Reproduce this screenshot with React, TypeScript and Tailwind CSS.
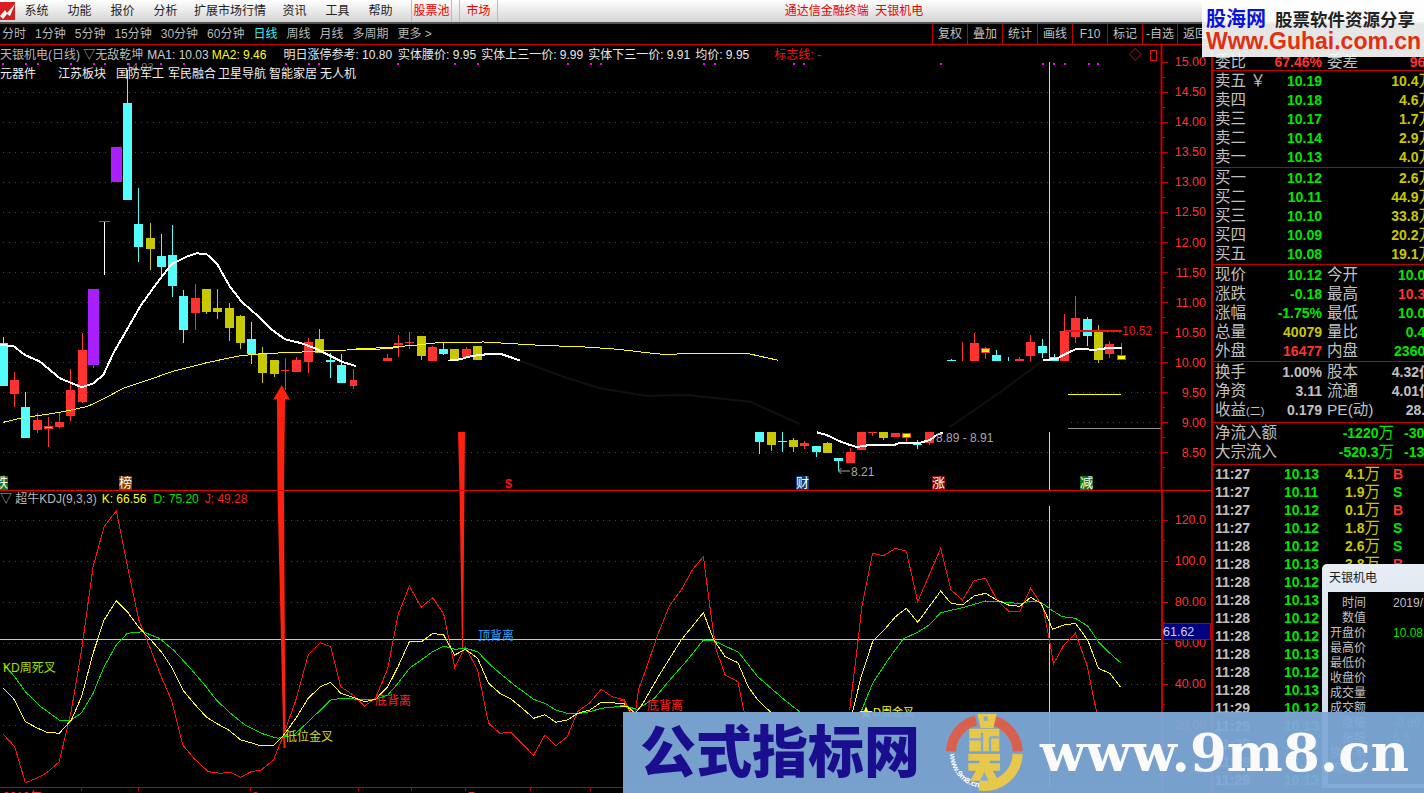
import React from "react";

type P = [number, number];
const RED = "#ff3232", CY = "#54fcfc", OL = "#c8c800", PU = "#aa1fff", YE = "#ffff00";
const z = (ox: number, oy: number, sx = 3) => (p: P): P => [p[0] / sx + ox, p[1] / 3 + oy];
const z7 = z(0, 60), z8 = z(350, 310), z9 = z(750, 290);
const z10 = z(0, 490, 2.45), z11 = z(620, 490, 2.613);
const line = (a: P[], f: (p: P) => P) => a.map(f).map((p) => `${p[0].toFixed(1)},${p[1].toFixed(1)}`).join(" ");

// X, wickTop, wickBottom, bodyTop, bodyBottom, colour, bodyWidth, wickColour
type C = [number, number, number, number, number, string, number?, string?];
const c7: C[] = [
  [10, 830, 978, 850, 978, CY, 9], [43, 936, 1040, 960, 1002, RED], [76, 995, 1135, 1041, 1133, CY], [112, 1060, 1118, 1080, 1110, RED],
  [145, 1072, 1160, 1098, 1106, YE, 8, RED], [178, 1060, 1105, 1086, 1100, RED], [211, 927, 1082, 990, 1068, RED], [247, 820, 1030, 870, 1025, RED],
  [280, 900, 923, 687, 915, PU, 11], [313, 484, 645, 484, 486, PU, 11, "#ffffff"], [349, 261, 366, 261, 366, PU, 11], [382, 30, 420, 129, 420, CY],
  [415, 385, 605, 492, 561, CY], [451, 489, 630, 534, 567, OL], [484, 522, 650, 588, 621, CY], [517, 495, 711, 585, 678, CY], [550, 690, 849, 708, 810, CY],
  [586, 672, 810, 714, 759, RED], [619, 687, 762, 687, 756, OL], [652, 687, 777, 744, 756, OL], [688, 729, 843, 744, 804, OL], [721, 765, 867, 768, 849, OL],
  [754, 786, 912, 837, 882, CY], [787, 861, 969, 879, 939, OL], [823, 900, 951, 900, 942, OL], [856, 894, 990, 930, 933, RED, 8], [889, 891, 936, 900, 936, RED],
  [925, 834, 939, 846, 906, RED], [958, 807, 879, 837, 879, OL], [991, 879, 954, 900, 906, CY], [1024, 882, 969, 915, 969, CY], [1060, 927, 987, 960, 978, RED, 7],
];
const c8: C[] = [
  [10, 177, 237, 210, 228, RED, 6], [112, 132, 153, 144, 153, RED], [145, 75, 141, 99, 105, RED], [178, 67, 117, 96, 99, RED], [214, 78, 150, 78, 138, OL],
  [247, 108, 153, 111, 153, RED], [280, 99, 135, 117, 132, CY], [313, 117, 153, 117, 153, OL], [349, 111, 141, 117, 141, RED], [382, 108, 150, 108, 150, OL],
];
const c9: C[] = [
  [28, 426, 492, 426, 456, CY], [64, 426, 483, 426, 465, OL], [97, 426, 486, 453, 456, CY], [130, 444, 486, 450, 471, OL], [163, 453, 477, 459, 468, RED],
  [199, 468, 501, 468, 486, CY], [232, 456, 489, 459, 489, OL], [265, 504, 543, 504, 513, CY], [301, 474, 519, 486, 519, RED], [334, 426, 480, 426, 480, RED],
  [367, 426, 438, 426, 429, RED], [400, 426, 450, 426, 444, OL], [436, 429, 441, 429, 441, RED], [469, 429, 456, 429, 441, YE, 8, RED], [501, 450, 477, 462, 465, CY],
  [538, 426, 465, 426, 459, RED], [603, 208, 212, 210, 212, CY], [636, 156, 212, 156, 158, RED, 1], [673, 129, 212, 159, 212, RED], [706, 170, 207, 174, 186, YE, 8, RED],
  [739, 180, 212, 195, 212, CY], [775, 200, 212, 200, 212, CY, 1], [808, 200, 212, 207, 212, PU, 8, RED], [841, 135, 212, 156, 198, RED], [877, 147, 204, 168, 189, CY],
  [913, 192, 212, 201, 212, CY], [943, 72, 243, 123, 212, RED], [976, 18, 159, 84, 141, RED], [1012, 81, 168, 87, 138, CY], [1045, 105, 219, 126, 210, OL],
  [1078, 153, 204, 162, 192, RED], [1114, 159, 207, 195, 207, YE, 8, RED],
];

const ma1a: P[] = [[0, 855], [40, 858], [75, 885], [120, 905], [180, 955], [245, 982], [280, 970], [310, 945], [340, 880], [380, 810], [420, 740], [470, 670], [515, 612], [560, 590], [590, 580], [620, 583], [650, 610], [690, 680], [725, 725], [770, 765], [810, 805], [855, 838], [905, 850], [945, 865], [985, 885], [1025, 905], [1067, 918]];
const ma1b: P[] = [[295, 152], [330, 148], [365, 138], [400, 134], [420, 131], [450, 131], [480, 141], [510, 152]];
const ma1c: P[] = [[200, 427], [230, 435], [265, 452], [300, 465], [320, 471], [365, 464], [435, 464], [450, 458], [510, 458], [540, 450], [560, 435], [580, 427]];
const ma1d: P[] = [[878, 211], [920, 206], [950, 190], [980, 176], [1010, 178], [1030, 180], [1075, 174], [1115, 173]];
const ma2a: P[] = [[10, 1087], [60, 1075], [180, 1057], [260, 1040], [300, 1022], [370, 985], [430, 965], [515, 935], [620, 908], [720, 887], [800, 880], [870, 878], [975, 872], [1040, 870], [1110, 868], [1170, 866], [1200, 860]];
const ma2b: P[] = [[0, 118], [60, 115], [120, 112], [200, 105], [265, 98], [400, 96], [470, 100], [570, 106], [705, 111], [805, 118], [880, 127], [940, 133], [1075, 130], [1200, 132], [1285, 151]];

const j1: P[] = [[8, 733], [36, 770], [62, 878], [90, 865], [115, 848], [145, 815], [175, 660], [200, 480], [228, 230], [255, 110], [285, 62], [310, 215], [340, 390], [370, 480], [395, 560], [420, 630], [448, 765], [475, 805], [510, 845], [540, 850], [565, 847], [590, 862], [615, 845], [640, 840], [670, 810], [690, 750], [725, 630], [755, 495], [785, 458], [810, 470], [835, 590], [865, 615], [893, 648], [920, 625], [950, 535], [975, 375], [1003, 288], [1032, 352], [1060, 323], [1087, 372], [1114, 532], [1140, 470], [1170, 540], [1197, 700], [1225, 730], [1252, 727], [1280, 762], [1307, 796], [1335, 735], [1362, 767], [1390, 740], [1415, 665], [1445, 638], [1473, 598], [1500, 620], [1530, 630], [1545, 665]];
const k1: P[] = [[8, 595], [36, 630], [62, 695], [90, 713], [115, 727], [145, 730], [175, 690], [200, 620], [228, 490], [255, 390], [285, 332], [312, 365], [340, 412], [370, 450], [395, 485], [420, 530], [448, 600], [475, 640], [505, 680], [530, 700], [560, 720], [590, 750], [615, 758], [640, 768], [670, 767], [695, 735], [725, 685], [755, 625], [785, 590], [810, 577], [835, 610], [865, 622], [893, 635], [920, 628], [950, 590], [975, 530], [1003, 455], [1032, 456], [1060, 430], [1087, 435], [1114, 495], [1140, 478], [1170, 505], [1197, 580], [1225, 610], [1252, 627], [1280, 655], [1307, 685], [1335, 674], [1362, 697], [1390, 690], [1415, 670], [1445, 660], [1473, 637], [1500, 638], [1530, 642], [1545, 665]];
const d1: P[] = [[8, 520], [36, 560], [62, 605], [100, 650], [145, 690], [175, 690], [200, 668], [228, 610], [255, 530], [285, 465], [312, 430], [350, 425], [390, 445], [425, 480], [470, 540], [505, 590], [530, 630], [565, 670], [600, 705], [640, 730], [680, 745], [720, 735], [760, 690], [810, 630], [835, 625], [880, 628], [920, 628], [950, 615], [975, 580], [1003, 535], [1032, 510], [1060, 485], [1087, 468], [1114, 478], [1140, 475], [1170, 485], [1197, 520], [1225, 550], [1260, 585], [1307, 628], [1335, 640], [1362, 660], [1390, 670], [1420, 670], [1445, 665], [1473, 655], [1530, 648], [1545, 657]];
const j2: P[] = [[0, 630], [10, 630], [15, 645], [25, 665], [40, 670], [48, 600], [70, 530], [100, 430], [130, 345], [160, 300], [190, 238], [218, 200], [235, 350], [250, 475], [275, 555], [308, 575], [325, 670]];
const k2: P[] = [[0, 648], [20, 650], [40, 670], [60, 640], [100, 560], [160, 450], [218, 368], [245, 450], [275, 500], [308, 518], [335, 590], [360, 630], [395, 668]];
const d2: P[] = [[0, 645], [20, 650], [45, 658], [90, 625], [130, 570], [180, 505], [218, 450], [245, 452], [310, 487], [360, 560], [430, 630], [470, 666]];
const j3: P[] = [[600, 660], [615, 520], [632, 350], [660, 190], [688, 197], [720, 175], [748, 183], [778, 335], [808, 255], [838, 175], [865, 300], [895, 330], [925, 272], [955, 265], [985, 330], [1015, 363], [1045, 363], [1073, 295], [1105, 350], [1122, 450], [1133, 522], [1160, 465], [1190, 430], [1220, 525], [1245, 665]];
const k3: P[] = [[608, 665], [630, 560], [660, 455], [690, 420], [720, 380], [748, 355], [778, 397], [808, 350], [838, 303], [865, 340], [895, 345], [925, 318], [955, 310], [985, 330], [1015, 345], [1045, 349], [1073, 322], [1100, 340], [1122, 395], [1130, 418], [1160, 405], [1190, 400], [1222, 450], [1250, 535], [1280, 550], [1308, 592]];
const d3: P[] = [[630, 665], [660, 580], [700, 510], [740, 447], [780, 425], [808, 405], [838, 368], [895, 353], [955, 333], [1015, 337], [1045, 341], [1073, 333], [1100, 337], [1125, 358], [1155, 380], [1190, 385], [1222, 408], [1250, 455], [1280, 490], [1308, 518]];

const Candles = ({ data, f }: { data: C[]; f: (p: P) => P }) => (
  <g shapeRendering="crispEdges">
    {data.map((d, i) => {
      const [x, wt] = f([d[0], d[1]]);
      const wb = f([d[0], d[2]])[1], bt = f([d[0], d[3]])[1], bb = f([d[0], d[4]])[1];
      const w = d[6] ?? 9;
      const cx = Math.round(x);
      return (
        <g key={i}>
          <line x1={cx + 0.5} x2={cx + 0.5} y1={wt} y2={Math.max(wb, wt + 1)} stroke={d[7] ?? d[5]} />
          <rect x={cx - Math.floor(w / 2)} y={bt} width={w} height={Math.max(bb - bt, 1)} fill={d[5]} stroke={d[7] && w === 8 ? d[7] : "none"} strokeWidth={d[7] && w === 8 ? 1 : 0} />
        </g>
      );
    })}
  </g>
);

const priceTicks = ["15.00", "14.50", "14.00", "13.50", "13.00", "12.50", "12.00", "11.50", "11.00", "10.50", "10.00", "9.50", "9.00", "8.50"];
const priceY = (i: number) => 61.7 + i * 30.05;
const magenta = [2, 25, 37, 70, 93, 104, 127, 160, 183, 285, 308, 318, 397, 454, 477, 567, 590, 600, 703, 714, 793, 803, 940, 1042, 1053, 1064, 1088, 1097];

const tags: [number, string, string][] = [[-5, "跌", "#0a7a14"], [119, "榜", "#7f3d0a"], [796, "财", "#0a3c70"], [932, "涨", "#7d0a0a"], [1080, "减", "#0a7a14"]];

const PriceChart = () => (
  <svg width={1211} height={445} viewBox="0 45 1211 445" className="block" fontSize={12}>
    {priceTicks.slice(1).map((_, i) => {
      const y = Math.round(priceY(i + 1)) + 0.5;
      return <line key={i} x1={3} x2={1162} y1={y} y2={y} stroke="#b81818" strokeDasharray="1 5" shapeRendering="crispEdges" />;
    })}
    {magenta.map((x) => <rect key={x} x={x} y={63} width={2} height={2} fill="#ff00ff" />)}
    <line x1={1049.5} x2={1049.5} y1={62} y2={490} stroke="#d0d0d0" shapeRendering="crispEdges" />
    <text x={126} y={71} fill="#777" fontSize={11}>14.93</text>
    <Candles data={c7} f={z7} />
    <Candles data={c8} f={z8} />
    <Candles data={c9} f={z9} />
    <polyline points={line(ma2a, z7)} fill="none" stroke={YE} strokeWidth={1} shapeRendering="crispEdges" />
    <polyline points={line(ma2b, z8)} fill="none" stroke={YE} strokeWidth={1} shapeRendering="crispEdges" />
    <polyline points={line(ma1a, z7)} fill="none" stroke="#fff" strokeWidth={2} shapeRendering="crispEdges" />
    <polyline points={line(ma1b, z8)} fill="none" stroke="#fff" strokeWidth={2} shapeRendering="crispEdges" />
    <rect x={357} y={361} width={711} height={71} fill="#000" />
    <polyline points={line([[510, 152], [640, 200], [750, 235], [890, 258], [1010, 255], [1200, 275], [1350, 342]], z8)} fill="none" stroke="#101010" strokeWidth={2} />
    <polyline points={line([[600, 410], [760, 300], [880, 211]], z9)} fill="none" stroke="#101010" strokeWidth={2} />
    <polyline points={line(ma1c, z9)} fill="none" stroke="#fff" strokeWidth={2} shapeRendering="crispEdges" />
    <polyline points={line(ma1d, z9)} fill="none" stroke="#fff" strokeWidth={2} shapeRendering="crispEdges" />
    <polygon points="281.7,385 290,400 285,399 284,490 277.5,490 277,399 273,400" fill="#ff2010" />
    <polygon points="458,432 465,432 464.5,490 459.5,490" fill="#ff2010" />
    <rect x={1065} y={330} width={57} height={2} fill="#f01010" />
    <text x={1122} y={335} fill="#e81818" fontSize={12}>10.52</text>
    <rect x={1068} y={394} width={53} height={1} fill={YE} />
    <rect x={1068} y={428} width={94} height={1} fill="#909090" />
    <text x={936} y={442} fill="#a8a8a8" fontSize={12}>8.89 - 8.91</text>
    <path d="M838.5 471H850M838.5 471l3-3M838.5 471l3 3" stroke="#a8a8a8" fill="none" />
    <text x={851} y={476} fill="#a8a8a8" fontSize={12}>8.21</text>
    {tags.map(([x, t, bg]) => (
      <g key={x}>
        <rect x={x} y={476} width={13} height={14} fill={bg} />
        <text x={x} y={487} fill="#fff" fontSize={13}>{t}</text>
      </g>
    ))}
    <text x={505} y={488} fill="#f01010" fontSize={13} fontWeight={700}>$</text>
    <text x={1135} y={59} fill="#e01010" fontSize={13} textAnchor="middle">◇</text>
    <rect x={1150.5} y={50.5} width={6} height={10} fill="none" stroke="#e01010" />
    <line x1={1161.5} x2={1161.5} y1={45} y2={490} stroke="#c00000" strokeWidth={2} />
    {priceTicks.map((t, i) => {
      const y = priceY(i);
      return (
        <g key={t}>
          <line x1={1162} x2={1168} y1={Math.round(y) + 0.5} y2={Math.round(y) + 0.5} stroke="#c00000" shapeRendering="crispEdges" />
          <line x1={1162} x2={1165} y1={Math.round(y + 15) + 0.5} y2={Math.round(y + 15) + 0.5} stroke="#c00000" shapeRendering="crispEdges" />
          <text x={1206} y={y + 4.5} textAnchor="end" fill={RED} fontSize={12.5}>{t}</text>
        </g>
      );
    })}
  </svg>
);

const subTicks: [string, number][] = [["120.0", 519.6], ["100.0", 560.7], ["80.00", 601.7], ["60.00", 642.7], ["40.00", 683.7], ["20.00", 724.7]];

const KdjChart = () => (
  <svg width={1211} height={302} viewBox="0 491 1211 302" className="block" fontSize={12}>
    {subTicks.map(([t, y]) => <line key={t} x1={3} x2={1162} y1={Math.round(y) + 0.5} y2={Math.round(y) + 0.5} stroke="#b81818" strokeDasharray="1 5" shapeRendering="crispEdges" />)}
    <line x1={1049.5} x2={1049.5} y1={506} y2={787} stroke="#d0d0d0" shapeRendering="crispEdges" />
    <rect x={0} y={639} width={1162} height={1} fill="#c8c8c8" />
    <polygon points="277.5,491 284,491 285.5,748 283.5,748" fill="#ff2010" />
    <polygon points="459.5,491 464.5,491 463,648 462,648" fill="#ff2010" />
    {[[j1, z10, "#ff1010"], [d1, z10, "#00e000"], [k1, z10, YE], [j2, z11, "#ff1010"], [d2, z11, "#00e000"], [k2, z11, YE], [j3, z11, "#ff1010"], [d3, z11, "#00e000"], [k3, z11, YE]].map((s, i) => (
      <polyline key={i} points={line(s[0] as P[], s[1] as (p: P) => P)} fill="none" stroke={s[2] as string} strokeWidth={1} shapeRendering="crispEdges" />
    ))}
    <text x={3} y={672} fill="#a8e000" fontSize={12}>KD周死叉</text>
    <text x={285} y={741} fill="#d8d820" fontSize={12}>低位金叉</text>
    <text x={375} y={705} fill="#ff2020" fontSize={12}>底背离</text>
    <text x={478} y={640} fill="#28a0ff" fontSize={12}>顶背离</text>
    <text x={647} y={710} fill="#ff2020" fontSize={12}>底背离</text>
    <polygon points="866,706 868,711 873,711 869,714 870.5,719 866,716 861.5,719 863,714 859,711 864,711" fill={YE} />
    <text x={873} y={716} fill={YE} fontSize={11}>D周金叉</text>
    <rect x={0} y={787} width={1162} height={1} fill="#c00000" />
    {[81, 138, 250, 358, 411, 465, 530, 590].map((x) => <line key={x} x1={x + 0.5} x2={x + 0.5} y1={788} y2={791} stroke="#c00000" shapeRendering="crispEdges" />)}
    <text x={3} y={801} fill={RED} fontSize={12}>2019年</text>
    <text x={252} y={801} fill={RED} fontSize={12}>8</text>
    <text x={468} y={801} fill={RED} fontSize={12}>7</text>
    <line x1={1162} x2={1162} y1={491} y2={793} stroke="#c00000" strokeWidth={2} />
    {subTicks.map(([t, y]) => (
      <g key={t}>
        <line x1={1162} x2={1168} y1={Math.round(y) + 0.5} y2={Math.round(y) + 0.5} stroke="#c00000" shapeRendering="crispEdges" />
        <line x1={1162} x2={1165} y1={Math.round(y + 20.5) + 0.5} y2={Math.round(y + 20.5) + 0.5} stroke="#c00000" shapeRendering="crispEdges" />
        <text x={1206} y={y + 4.5} textAnchor="end" fill={RED} fontSize={12.5}>{t}</text>
      </g>
    ))}
    <rect x={1163.5} y={623.5} width={47} height={16} fill="#000080" stroke="#b00000" />
    <text x={1163} y={636} fill="#d0d0ff" fontSize={12.5}>61.62</text>
  </svg>
);

const L = ({ children, w = "w-[72px]" }: { children: React.ReactNode; w?: string }) => (
  <span className={`${w} shrink-0 text-[15.5px] leading-none text-[#c0c0c0] whitespace-nowrap`}>{children}</span>
);
const Num = ({ children, color, w = "w-[35px]" }: { children: React.ReactNode; color: string; w?: string }) => (
  <span className={`${w} flex shrink-0 justify-end text-[14px] font-bold leading-none whitespace-nowrap`} style={{ color }}>{children}</span>
);
const G = "#00e600", Y2 = "#c8c800", W = "#c0c0c0";

const Book = ({ label, price, vol }: { label: string; price: string; vol: string }) => (
  <div className="flex h-[19px] w-[230px] items-center pl-[2px]">
    <L>{label}</L>
    <Num color={G}>{price}</Num>
    <span className="ml-auto mr-[9px] flex items-center text-[14px] font-bold leading-none whitespace-nowrap text-[#c8c800]">
      {vol}<span className="text-[15.5px] font-normal">万</span>
    </span>
  </div>
);

const Stat = ({ a, av, ac, b, bv, bc }: { a: React.ReactNode; av: string; ac: string; b: string; bv: string; bc: string }) => (
  <div className="flex h-[19px] w-[240px] items-center pl-[2px]">
    <L>{a}</L>
    <Num color={ac}>{av}</Num>
    <span className="ml-[5px] w-[50px] shrink-0 whitespace-nowrap text-[15.5px] leading-none text-[#c0c0c0]">{b}</span>
    <span className="w-[56px] shrink-0 text-right text-[14px] font-bold leading-none whitespace-nowrap" style={{ color: bc }}>{bv}</span>
  </div>
);

const trades: [string, string, string, string][] = [
  ["11:27", "10.13", "4.1", "B"], ["11:27", "10.11", "1.9", "S"], ["11:27", "10.12", "0.1", "B"], ["11:27", "10.12", "1.8", "S"], ["11:28", "10.12", "2.6", "S"], ["11:28", "10.13", "3.8", "B"],
  ["11:28", "10.12", "1.2", "S"], ["11:28", "10.13", "0.6", "B"], ["11:28", "10.12", "2.1", "S"], ["11:28", "10.12", "0.9", "S"], ["11:28", "10.13", "1.4", "B"], ["11:28", "10.12", "0.7", "S"],
  ["11:28", "10.13", "1.1", "B"], ["11:29", "10.12", "2.2", "S"], ["11:29", "10.13", "0.5", "B"], ["11:29", "10.13", "1.6", "B"], ["11:29", "10.12", "0.8", "S"], ["11:29", "10.13", "3.0", "B"],
];

const Panel = () => (
  <div className="flex h-[748px] w-[213px] flex-col overflow-hidden border-l-2 border-[#c00000]">
    <div className="flex h-[26px] w-[240px] shrink-0 items-end border-b border-[#c00000] pb-[1px] pl-[2px]">
      <L>委比</L>
      <Num color={RED}>67.46%</Num>
      <span className="ml-[5px] w-[50px] whitespace-nowrap text-[15.5px] leading-none text-[#c0c0c0]">委差</span>
      <span className="w-[56px] text-right text-[14px] font-bold leading-none" style={{ color: RED }}>961</span>
    </div>
    <div className="shrink-0 border-b border-[#c00000] pb-[1px]">
      <Book label="卖五 ￥" price="10.19" vol="10.4" />
      <Book label="卖四" price="10.18" vol="4.6" />
      <Book label="卖三" price="10.17" vol="1.7" />
      <Book label="卖二" price="10.14" vol="2.9" />
      <Book label="卖一" price="10.13" vol="4.0" />
    </div>
    <div className="shrink-0 border-b border-[#c00000] pb-[1px]">
      <Book label="买一" price="10.12" vol="2.6" />
      <Book label="买二" price="10.11" vol="44.9" />
      <Book label="买三" price="10.10" vol="33.8" />
      <Book label="买四" price="10.09" vol="20.2" />
      <Book label="买五" price="10.08" vol="19.1" />
    </div>
    <div className="shrink-0 border-b border-[#c00000] pb-[1px]">
      <Stat a="现价" av="10.12" ac={G} b="今开" bv="10.05" bc={G} />
      <Stat a="涨跌" av="-0.18" ac={G} b="最高" bv="10.32" bc={RED} />
      <Stat a="涨幅" av="-1.75%" ac={G} b="最低" bv="10.03" bc={G} />
      <Stat a="总量" av="40079" ac={Y2} b="量比" bv="0.45" bc={G} />
      <Stat a="外盘" av="16477" ac={RED} b="内盘" bv="23602" bc={G} />
    </div>
    <div className="shrink-0 border-b border-[#c00000] pb-[3px]">
      <Stat a="换手" av="1.00%" ac={W} b="股本" bv="4.32亿" bc={W} />
      <Stat a="净资" av="3.11" ac={W} b="流通" bv="4.01亿" bc={W} />
      <Stat a={<>收益<span className="text-[11px]">(二)</span></>} av="0.179" ac={W} b="PE(动)" bv="28.1" bc={W} />
    </div>
    <div className="shrink-0 border-b border-[#c00000] pb-[3px]">
      {[["净流入额", "-1220", "-30.5"], ["大宗流入", "-520.3", "-13.0"]].map(([a, v, p]) => (
        <div key={a} className="flex h-[19px] w-[240px] items-center pl-[2px]">
          <span className="w-[124px] shrink-0 text-[15.5px] leading-none text-[#c0c0c0]">{a}</span>
          <span className="flex w-[55px] shrink-0 items-center justify-end text-[14px] font-bold leading-none whitespace-nowrap text-[#00e600]">
            {v}<span className="text-[15.5px] font-normal">万</span>
          </span>
          <span className="ml-[10px] text-[14px] font-bold leading-none text-[#00e600]">{p}</span>
        </div>
      ))}
    </div>
    {trades.map(([t, p, v, s], i) => (
      <div key={i} className="flex h-[18px] shrink-0 items-center pl-[2px] text-[14px] font-bold leading-none">
        <span className="w-[69px] text-[#c0c0c0]">{t}</span>
        <span className="w-[35px] text-[#00e600]">{p}</span>
        <span className="flex w-[61px] items-center justify-end text-[#c8c800]">{v}<span className="text-[15.5px] font-normal">万</span></span>
        <span className="ml-[13px]" style={{ color: s === "B" ? RED : G }}>{s}</span>
      </div>
    ))}
  </div>
);

const Logo = () => (
  <svg width={15} height={19} viewBox="0 0 15 19" className="shrink-0">
    <rect width={15} height={18} y={0} fill="#d81e1e" />
    <path d="M0 14 L5 8 L7 11 L15 2 L10 14 L7 12 L3 17 Z" fill="#fff" />
  </svg>
);

const menus: [string, string][] = [["系统", "w-[43px]"], ["功能", "w-[43px]"], ["报价", "w-[43px]"], ["分析", "w-[43px]"], ["扩展市场行情", "w-[86px]"], ["资讯", "w-[43px]"], ["工具", "w-[43px]"], ["帮助", "w-[43px]"]];
const periods = ["分时", "1分钟", "5分钟", "15分钟", "30分钟", "60分钟", "日线", "周线", "月线", "多周期", "更多 >"];
const tools = ["复权", "叠加", "统计", "画线", "F10", "标记", "-自选", "返回"];

const popupRows: [string, string, string][] = [
  ["时间", "2019/", "#c0c0c0"], ["数值", "", ""], ["开盘价", "10.08", "#00e000"], ["最高价", "", ""], ["最低价", "", ""], ["收盘价", "", ""], ["成交量", "", ""], ["成交额", "", ""],
  ["涨幅", "-0.99", "#00e000"], ["振幅", "0.3", "#00e000"], ["换手率", "", ""], ["流通股", "", ""],
];

export default function App() {
  return (
    <div className="relative h-[793px] w-[1424px] overflow-hidden bg-black font-['Liberation_Sans','Noto_Sans_CJK_SC',sans-serif] text-[12px] leading-none">
      {/* menu */}
      <div className="flex h-[24px] items-center border-b-2 border-[#555] bg-gradient-to-b from-white to-[#d4d4d4] text-[#222]">
        <Logo />
        {menus.map(([m, w]) => <span key={m} className={`${w} text-center whitespace-nowrap`}>{m}</span>)}
        <span className="ml-[9px] flex h-[22px] w-[41px] items-center justify-center border-x border-[#bbb] text-[#f00000]">股票池</span>
        <span className="ml-[7px] flex h-[22px] w-[39px] items-center justify-center border-x border-[#bbb] text-[#f00000]">市场</span>
        <span className="w-[712px] text-center text-[#f00000] whitespace-pre">通达信金融终端  天银机电</span>
      </div>
      {/* toolbar */}
      <div className="flex h-[21px] border-b border-[#d00000]">
        <div className="flex w-[932px] items-center gap-[9px] pl-[2px] text-[#b8b8b8]">
          {periods.map((p) => <span key={p} className={p === "日线" ? "text-[#30f0f0]" : ""}>{p}</span>)}
        </div>
        <div className="flex text-[#c0c0c0]">
          {tools.map((t) => <span key={t} className="flex h-[20px] w-[35px] items-center justify-center border-l border-[#c00000]">{t}</span>)}
        </div>
      </div>
      <div className="flex">
        <div className="relative w-[1211px]">
          {/* indicator captions over the chart */}
          <div className="absolute left-0 top-[4px] flex whitespace-nowrap">
            <span className="text-[#b8b8b8]">天银机电(日线) ▽无敌乾坤</span>
            <span className="ml-[4px] text-[#d0d0d0]">MA1: 10.03</span>
            <span className="ml-[3px] text-[#ffff00]">MA2: 9.46</span>
            <span className="ml-[17px] text-[#e8e8e8]">明日涨停参考: 10.80</span>
            <span className="ml-[6px] text-[#e8e8e8]">实体腰价: 9.95</span>
            <span className="ml-[5px] text-[#e8e8e8]">实体上三一价: 9.99</span>
            <span className="ml-[5px] text-[#e8e8e8]">实体下三一价: 9.91</span>
            <span className="ml-[5px] text-[#e8e8e8]">均价: 9.95</span>
            <span className="ml-[25px] text-[#f01010]">标志线: -</span>
          </div>
          <div className="absolute left-0 top-[23px] flex whitespace-nowrap text-[#f0f0f0]">
            <span className="w-[58px]">元器件</span>
            <span className="w-[58px]">江苏板块</span>
            <span className="w-[52px]">国防军工</span>
            <span className="w-[50px]">军民融合</span>
            <span className="w-[51px]">卫星导航</span>
            <span className="w-[51px]">智能家居</span>
            <span>无人机</span>
          </div>
          <PriceChart />
          <div className="h-px bg-[#e00000]" />
          <KdjChart />
          <div className="absolute left-0 top-[448px] flex whitespace-nowrap">
            <span className="text-[#b8b8b8]">▽ 超牛KDJ(9,3,3)</span>
            <span className="ml-[5px] text-[#ffff00]">K: 66.56</span>
            <span className="ml-[7px] text-[#00e000]">D: 75.20</span>
            <span className="ml-[6px] text-[#f02020]">J: 49.28</span>
          </div>
        </div>
        <Panel />
      </div>

      {/* floating data window */}
      <div className="absolute left-[1322px] top-[564px] h-[224px] w-[112px] rounded-t-[5px] bg-gradient-to-b from-[#e6edf5] to-[#c5d3e2] pl-[6px]">
        <div className="flex h-[28px] items-center pl-[1px] text-[12px] text-[#1a1a1a]">天银机电</div>
        <div className="h-[192px] bg-black pt-[3px]">
          {popupRows.map(([a, v, col]) => (
            <div key={a} className="flex h-[15px] items-center">
              <span className="w-[38px] text-right text-[12px] text-[#c0c0c0]">{a}</span>
              <span className="ml-[27px] whitespace-nowrap text-[12px]" style={{ color: col }}>{v}</span>
            </div>
          ))}
        </div>
      </div>

      {/* top-right watermark */}
      <div className="absolute left-[1202px] top-0 flex h-[57px] w-[222px] flex-col bg-white/90 pl-[4px]">
        <div className="flex h-[29px] items-end">
          <span className="text-[20px] font-bold leading-none text-[#0a14d8]">股海网</span>
          <span className="ml-[9px] text-[17.5px] font-bold leading-none text-[#222]">股票软件资源分享</span>
        </div>
        <div className="mt-[1px] text-[23px] font-bold leading-none text-[#e03010]">Www.Guhai.com.cn</div>
      </div>

      {/* bottom banner watermark */}
      <div className="absolute left-[623px] top-[712px] flex h-[81px] w-[801px] items-center bg-[#7ea9d8]/95">
        <span className="ml-[17px] w-[300px] whitespace-nowrap text-[56px] font-black leading-none text-[#1b0e8e]">公式指标网</span>
        <svg width={90} height={81} viewBox="0 0 270 243" className="shrink-0">
          <path d="M33 118 A100 100 0 0 1 108 25" fill="none" stroke="#d9604e" strokeWidth={30} />
          <path d="M158 25 A100 100 0 0 1 233 118" fill="none" stroke="#d9604e" strokeWidth={30} />
          <path d="M233 126 A100 100 0 0 1 118 221" fill="none" stroke="#e8c84a" strokeWidth={30} />
          <path d="M112 6 H170 L160 48 H122 Z" fill="#e8c84a" />
          <circle cx={137} cy={20} r={7} fill="#7ea9d8" />
          <path d="M88 50 H178 V118 H88 Z" fill="#e8c84a" />
          <path d="M88 82 H126 M126 62 V118 M150 76 H178 M150 76 V118" stroke="#7ea9d8" strokeWidth={7} fill="none" />
          <path d="M85 125 H180 V146 H150 V154 H180 V176 H158 L176 206 H150 V232 H118 V206 H90 L108 176 H85 V154 H118 V146 H85 Z" fill="#e8c84a" />
          <path d="M133 180 L120 206 H146 Z" fill="#7ea9d8" />
          <path id="wmarc" d="M30 126 A104 104 0 0 0 112 226" fill="none" />
          <text fill="#fff" fontSize={24} fontWeight={700}><textPath href="#wmarc">www.9m8.cn</textPath></text>
        </svg>
        <span className="ml-[10px] whitespace-nowrap font-['DejaVu_Serif',serif] text-[53px] font-bold leading-none text-[#fafafa]">www.9m8.cn</span>
      </div>
    </div>
  );
}
